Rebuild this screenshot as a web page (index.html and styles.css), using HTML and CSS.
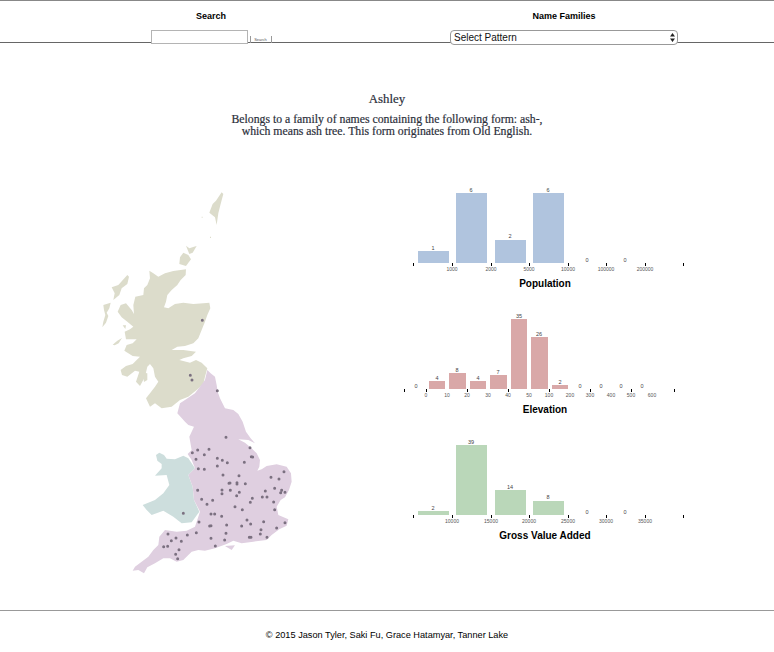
FILE: index.html
```html
<!DOCTYPE html>
<html lang="en">
<head>
    <meta charset="UTF-8">
    <meta name="viewport" content="width=device-width, initial-scale=1.0">
    <title>Name Families</title>
    <link rel="stylesheet" href="styles.css">
</head>
<body>
    <header class="topbar">
        <div class="topbar-col">
            <h3>Search</h3>
            <form class="search-form">
                <input type="text" class="search-box">
                <button type="button" class="search-btn">Search</button>
            </form>
        </div>
        <div class="topbar-col">
            <h3>Name Families</h3>
            <span class="select-wrap">
                <select class="pattern-select">
                    <option>Select Pattern</option>
                </select>
                <svg class="select-arrows" width="5" height="9" viewBox="0 0 5 9"><path d="M2.5 0 5 3.5H0zM2.5 9 0 5.5H5z"/></svg>
            </span>
        </div>
    </header>

    <section class="intro">
        <h2>Ashley</h2>
        <p>Belongs to a family of names containing the following form: ash-,<br>which means ash tree. This form originates from Old English.</p>
    </section>

    <main class="content">
        <svg class="map" width="400" height="400" viewBox="0 180 400 400">
            <!-- traced by eye at 3x, hence the scaled groups -->
            <g transform="translate(90 180) scale(.3333)">
                <path class="scotland" d="M178 272 190 280 205 290 225 280 250 273 288 268 287 285 272 300 262 315 245 330 232 345 228 365 222 382 235 385 255 372 280 368 310 372 340 370 358 368 361 385 352 405 345 425 335 450 325 475 310 490 285 498 262 500 245 510 280 510 318 515 305 528 280 535 268 540 300 548 318 540 335 548 352 565 345 590 340 612 320 630 295 650 270 660 245 680 215 685 195 670 180 680 168 655 180 640 195 620 205 605 195 590 190 565 180 552 172 560 165 590 150 618 138 605 148 575 135 572 112 590 96 585 92 570 108 558 128 552 150 530 128 528 103 512 110 495 128 490 140 478 108 478 104 455 120 448 130 440 112 425 95 412 83 395 92 375 108 370 125 390 132 402 130 375 136 350 160 345 162 325 172 315 180 295Z"/>
                <path class="scotland" d="M65 322 85 315 112 285 117 290 112 312 95 325 88 345 70 360 74 340ZM40 375 62 368 58 385 50 398 55 408 48 428 37 442 40 425 46 405 42 390ZM68 494 82 482 96 474 86 490 74 496ZM98 436 108 436 106 447ZM158 578 172 580 172 600 162 606ZM270 232 280 218 295 225 303 238 288 258 268 252ZM288 197 298 205 312 200 320 198 308 218 298 222ZM358 98 368 72 378 62 395 37 400 42 392 72 385 100 380 135 375 112ZM335 110h3v3h-3ZM360 170h3v4h-3Z"/>
            </g>
            <g transform="translate(120 360) scale(.3333)">
                <path class="wales" d="M108 285 118 278 132 285 140 296 165 298 190 287 205 295 225 325 205 345 218 380 222 420 238 455 215 487 185 490 160 470 130 452 95 465 80 450 68 435 105 420 130 400 148 375 140 345 105 347 125 325 125 312 112 302Z"/>
                <path class="england" d="M262 30 272 40 285 50 290 75 293 95 300 115 315 145 340 150 355 162 368 185 378 215 392 235 405 250 385 240 355 238 375 248 395 265 410 280 420 300 418 320 412 332 425 328 440 318 470 313 500 320 513 340 515 365 507 390 495 412 482 420 470 440 475 465 505 478 500 497 478 508 455 525 440 540 400 545 365 550 340 542 320 552 285 565 255 572 235 570 215 575 190 600 170 605 150 595 130 595 105 610 82 622 72 640 55 630 38 632 45 620 65 605 85 590 100 570 115 555 118 530 135 510 170 515 200 512 225 500 240 455 222 420 218 380 205 345 225 325 215 300 203 282 215 270 208 230 222 200 205 195 195 185 172 160 180 130 195 120 225 100 255 60Z"/>
                <path class="england" d="M315 558 345 556 335 570Z"/>
                <path class="towns" d="M211 46h0M216 60h0M292 92h0M318 232h0M390 263h0M394 290h0M398 291h0M267 268h0M233 270h0M217 278h0M253 284h0M228 298h0M292 295h0M307 301h0M322 308h0M373 307h0M292 318h0M235 326h0M253 328h0M492 335h0M309 345h0M357 347h0M453 352h0M477 357h0M327 370h0M330 369h0M351 368h0M351 372h0M376 371h0M464 385h0M306 390h0M331 391h0M233 391h0M436 393h0M485 391h0M482 398h0M495 397h0M358 397h0M306 401h0M350 407h0M427 411h0M441 411h0M397 415h0M245 418h0M278 421h0M391 427h0M461 426h0M261 433h0M345 440h0M367 449h0M464 449h0M273 462h0M284 462h0M305 469h0M381 480h0M237 486h0M392 492h0M431 485h0M495 488h0M320 495h0M269 498h0M273 497h0M365 498h0M470 504h0M423 509h0M229 518h0M318 520h0M421 522h0M144 522h0M202 525h0M168 534h0M154 542h0M184 544h0M273 535h0M314 540h0M388 532h0M393 532h0M441 532h0M131 560h0M143 559h0M286 558h0M177 569h0M167 583h0M173 596h0M190 460h0M247 -119h0"/>
            </g>
        </svg>

        <div class="charts">
            <figure class="chart">
                <svg width="290" height="95" viewBox="400 185 290 95">
                    <rect class="bar-blue" x="418" y="251" width="31" height="12"/>
                    <rect class="bar-blue" x="456" y="193" width="31" height="70"/>
                    <rect class="bar-blue" x="495" y="240" width="31" height="23"/>
                    <rect class="bar-blue" x="533" y="193" width="31" height="70"/>
                    <g class="count">
                        <text x="433" y="250">1</text><text x="471" y="192">6</text><text x="510" y="238">2</text><text x="548" y="192">6</text><text x="587" y="262">0</text><text x="625" y="262">0</text>
                    </g>
                    <path class="ticks" d="M413.5 263v3M452.5 263v3M491.5 263v3M529.5 263v3M568.5 263v3M606.5 263v3M645.5 263v3M683.5 263v3"/>
                    <g class="tick-label">
                        <text x="452" y="271">1000</text><text x="491" y="271">2000</text><text x="529" y="271">5000</text><text x="568" y="271">10000</text><text x="606" y="271">100000</text><text x="645" y="271">200000</text>
                    </g>
                </svg>
                <figcaption>Population</figcaption>
            </figure>
            <figure class="chart">
                <svg width="290" height="95" viewBox="400 311 290 95">
                    <rect class="bar-red" x="429" y="381" width="16" height="8"/>
                    <rect class="bar-red" x="449" y="373" width="17" height="16"/>
                    <rect class="bar-red" x="470" y="381" width="16" height="8"/>
                    <rect class="bar-red" x="490" y="375" width="17" height="14"/>
                    <rect class="bar-red" x="511" y="319" width="16" height="70"/>
                    <rect class="bar-red" x="531" y="337" width="17" height="52"/>
                    <rect class="bar-red" x="552" y="385" width="16" height="4"/>
                    <g class="count">
                        <text x="416" y="388">0</text><text x="437" y="380">4</text><text x="457" y="372">8</text><text x="478" y="380">4</text><text x="498" y="374">7</text><text x="519" y="318">35</text><text x="539" y="336">26</text><text x="560" y="384">2</text><text x="580" y="388">0</text><text x="601" y="388">0</text><text x="621" y="388">0</text><text x="642" y="388">0</text>
                    </g>
                    <path class="ticks" d="M404.5 389v3M426.5 389v3M467.5 389v3M508.5 389v3M549.5 389v3M590.5 389v3M631.5 389v3M674.5 389v3"/>
                    <g class="tick-label">
                        <text x="426" y="397">0</text><text x="447" y="397">10</text><text x="467" y="397">20</text><text x="488" y="397">30</text><text x="508" y="397">40</text><text x="529" y="397">50</text><text x="549" y="397">100</text><text x="570" y="397">200</text><text x="590" y="397">300</text><text x="611" y="397">400</text><text x="631" y="397">500</text><text x="652" y="397">600</text>
                    </g>
                </svg>
                <figcaption>Elevation</figcaption>
            </figure>
            <figure class="chart">
                <svg width="290" height="95" viewBox="400 437 290 95">
                    <rect class="bar-green" x="418" y="511" width="31" height="4"/>
                    <rect class="bar-green" x="456" y="445" width="31" height="70"/>
                    <rect class="bar-green" x="495" y="490" width="31" height="25"/>
                    <rect class="bar-green" x="533" y="501" width="31" height="14"/>
                    <g class="count">
                        <text x="433" y="510">2</text><text x="471" y="444">39</text><text x="510" y="489">14</text><text x="548" y="499">8</text><text x="587" y="514">0</text><text x="625" y="514">0</text>
                    </g>
                    <path class="ticks" d="M413.5 515v3M452.5 515v3M491.5 515v3M529.5 515v3M568.5 515v3M606.5 515v3M645.5 515v3M683.5 515v3"/>
                    <g class="tick-label">
                        <text x="452" y="523">10000</text><text x="491" y="523">15000</text><text x="529" y="523">20000</text><text x="568" y="523">25000</text><text x="606" y="523">30000</text><text x="645" y="523">35000</text>
                    </g>
                </svg>
                <figcaption>Gross Value Added</figcaption>
            </figure>
        </div>
    </main>

    <footer class="footer">© 2015 Jason Tyler, Saki Fu, Grace Hatamyar, Tanner Lake</footer>
</body>
</html>
```

FILE: styles.css
```css
body {
    margin: 0;
    background-color: #ffffff;
    font-family: "Liberation Sans", Arial, sans-serif;
    color: #000000;
}
.topbar {
    display: grid;
    grid-template-columns: 352px 352px;
    justify-content: center;
    height: 41px;
    border-top: 1px solid #888888;
    border-bottom: 1px solid #666666;
}
.topbar-col {
    text-align: center;
}
.topbar-col h3 {
    margin: 10px 0 8px;
    font-size: 9px;
    line-height: 11px;
    font-weight: bold;
}
.topbar-col:last-child h3 {
    padding-left: 2px;
}
.search-form {
    display: flex;
    justify-content: center;
    align-items: flex-end;
    gap: 2px;
}
.search-box {
    width: 97px;
    height: 14px;
    padding: 0;
    box-sizing: border-box;
    border: 1px solid #b4b4b4;
    background: #ffffff;
}
.search-btn {
    width: 22px;
    height: 7px;
    padding: 0;
    margin-bottom: 1px;
    border: none;
    border-left: 1px solid #999999;
    border-right: 1px solid #999999;
    background: none;
    font-family: inherit;
    font-size: 4px;
    line-height: 7px;
    color: #555555;
}
.select-wrap {
    position: relative;
    display: block;
    width: 228px;
    margin-left: 63px;
}
.pattern-select {
    display: block;
    width: 228px;
    height: 15px;
    padding: 0 3px;
    box-sizing: border-box;
    appearance: none;
    border: 1px solid #999999;
    border-radius: 4px;
    background: #ffffff;
    font-family: "Liberation Sans", Arial, sans-serif;
    font-size: 10px;
    color: #111111;
}
.select-arrows {
    position: absolute;
    top: 3px;
    right: 3px;
    fill: #222222;
}
.intro {
    margin-top: 49px;
    text-align: center;
    font-family: "Liberation Serif", "Times New Roman", serif;
    color: #2b2f3a;
    -webkit-text-stroke: 0.2px #2b2f3a;
}
.intro h2 {
    margin: 0 0 7px;
    font-size: 12.8px;
    line-height: 15px;
    font-weight: normal;
}
.intro p {
    margin: 0;
    font-size: 11.75px;
    line-height: 12px;
}
.content {
    display: flex;
    margin-top: 42px;
    height: 400px;
}
.map {
    flex: none;
}
.scotland {
    fill: #dcdccb;
}
.england {
    fill: #dfcfe0;
}
.wales {
    fill: #cddedd;
}
.towns {
    fill: none;
    stroke: #7b7080;
    stroke-width: 9;
    stroke-linecap: round;
}
.charts {
    padding-top: 5px;
}
.chart {
    margin: 0 0 9px;
    width: 290px;
    height: 117px;
}
.chart svg {
    display: block;
}
.chart figcaption {
    margin-top: -2px;
    text-align: center;
    font-size: 10px;
    line-height: 12px;
    font-weight: bold;
}
.bar-blue {
    fill: #b0c4de;
}
.bar-red {
    fill: #d9a8a8;
}
.bar-green {
    fill: #bad7b9;
}
.count text {
    font-size: 5.5px;
    text-anchor: middle;
    fill: #444444;
}
.tick-label text {
    font-size: 5px;
    text-anchor: middle;
    fill: #555555;
}
.ticks {
    fill: none;
    stroke: #000000;
    stroke-width: 1;
}
.footer {
    margin-top: 30px;
    padding-top: 19px;
    border-top: 1px solid #999999;
    text-align: center;
    font-size: 9.2px;
    line-height: 11px;
}
```
